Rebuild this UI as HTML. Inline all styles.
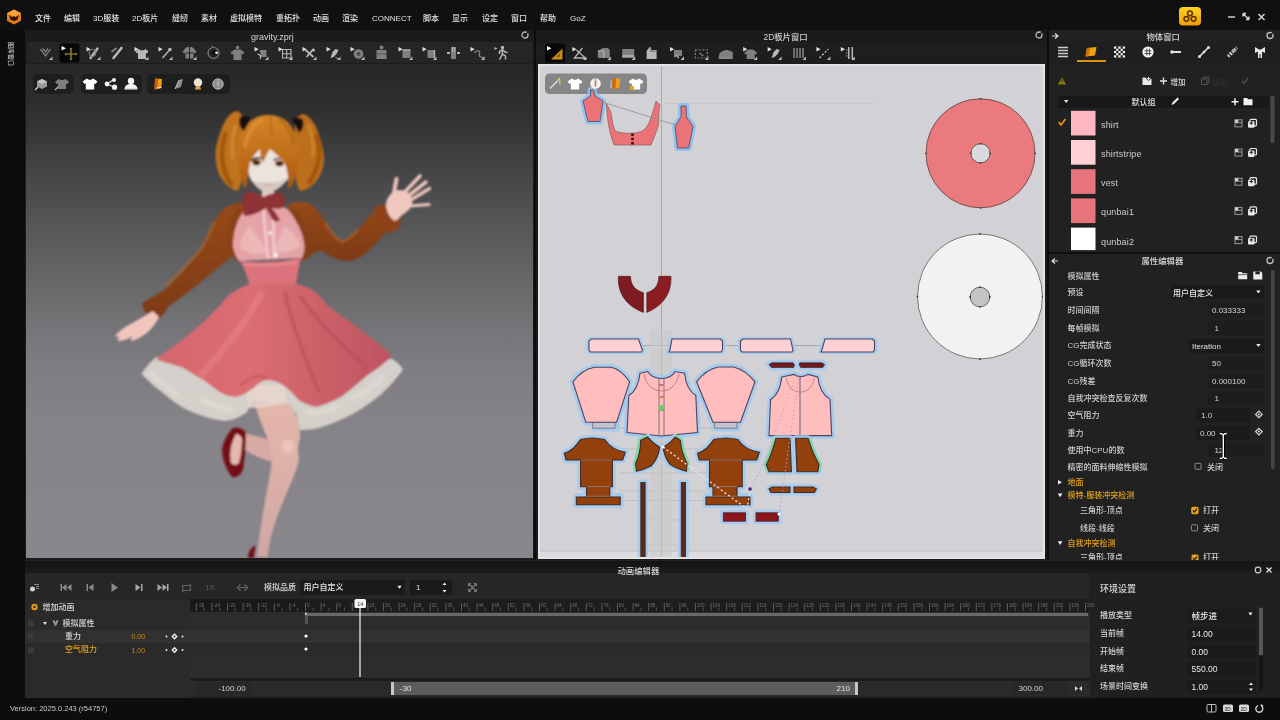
<!DOCTYPE html>
<html lang="zh">
<head>
<meta charset="utf-8">
<title>gravity.zprj</title>
<style>
*{box-sizing:border-box;margin:0;padding:0}
html,body{width:1280px;height:720px;overflow:hidden;background:#0d0d0d}
body{position:relative;font-family:"Liberation Sans","Noto Sans CJK SC",sans-serif;font-size:8px;color:#d8d8d8;line-height:1}
.abs{position:absolute}
.t{position:absolute;white-space:nowrap;color:#cfcfcf;font-size:8px;line-height:10px;height:10px;font-weight:500;filter:blur(.4px)}
svg{position:absolute;overflow:visible}
#menubar{left:0;top:0;width:1280px;height:30px;background:#101010}
#menubar .t{top:13.500px;color:#e2e2e2}
#leftbar{left:0;top:30px;width:25px;height:672px;background:#0c0c0c}
#win3d{left:25px;top:30px;width:509px;height:531px;background:#1b1b1b}
#tb3d{left:27px;top:42px;width:506px;height:21px;background:#252525}
#view3d{left:26px;top:64px;width:506.500px;height:494px;background:linear-gradient(to bottom,#272727 0%,#303030 10%,#424244 20%,#525254 30%,#626265 40.500%,#717174 50.600%,#7e7c81 60.700%,#858387 72%,#89878b 100%);overflow:hidden}
#win2d{left:536px;top:30px;width:511px;height:531px;background:#1b1b1b}
#tb2d{left:536px;top:42px;width:511px;height:21px;background:#1e1e1e}
#view2d{left:538px;top:64px;width:507px;height:494.500px;background:#d2d1d5;border:2px solid #e4e4e7;overflow:hidden}
#right{left:1049px;top:30px;width:231px;height:531px;background:#212121}
#bottom{left:25px;top:560px;width:1255px;height:138px;background:#232323}
#status{left:0;top:698px;width:1280px;height:22px;background:#0e0e0e}
.pill{position:absolute;border-radius:5px;background:rgba(22,22,22,.62);filter:blur(.6px)}
</style>
</head>
<body>
<div id="menubar" class="abs">
<svg style="left:6px;top:9px" width="16" height="16" viewBox="0 0 16 16"><polygon points="8,0.5 15,4.2 15,11.8 8,15.5 1,11.8 1,4.2" fill="#e8791a"/><polygon points="8,0.5 15,4.2 8,8 1,4.2" fill="#f6a23a"/><polygon points="3.2,6 6.3,8.2 8,7 9.7,8.2 12.8,6 11.5,10.5 8,12.3 4.5,10.5" fill="#2a1608"/></svg>
<span class="t" style="left:35px">文件</span>
<span class="t" style="left:64px">编辑</span>
<span class="t" style="left:93px">3D服装</span>
<span class="t" style="left:132px">2D板片</span>
<span class="t" style="left:172px">缝纫</span>
<span class="t" style="left:201px">素材</span>
<span class="t" style="left:230px">虚拟模特</span>
<span class="t" style="left:276px">重拓扑</span>
<span class="t" style="left:313px">动画</span>
<span class="t" style="left:342px">渲染</span>
<span class="t" style="left:372px">CONNECT</span>
<span class="t" style="left:423px">脚本</span>
<span class="t" style="left:452px">显示</span>
<span class="t" style="left:482px">设定</span>
<span class="t" style="left:511px">窗口</span>
<span class="t" style="left:540px">帮助</span>
<span class="t" style="left:570px">GoZ</span>
<svg style="left:1179px;top:7px" width="22" height="19" viewBox="0 0 22 19"><defs><linearGradient id="gy" x1="0" y1="0" x2="0" y2="1"><stop offset="0" stop-color="#ffd41e"/><stop offset="1" stop-color="#f09a10"/></linearGradient></defs><rect x="0" y="0" width="22" height="18.500" rx="4" fill="url(#gy)"/><g fill="none" stroke="#5a3200" stroke-width="1.500"><circle cx="11" cy="6.300" r="2.400"/><circle cx="7.400" cy="11.800" r="2.400"/><circle cx="14.600" cy="11.800" r="2.400"/></g></svg>
<svg style="left:1224px;top:10px" width="46" height="14" viewBox="0 0 46 14"><g stroke="#d8d8d8" stroke-width="1.4" fill="none"><path d="M4 7h7"/><path d="M19 3.5l6 6M19 3.5h3M19 3.5v3M25 9.500h-3M25 9.500v-3"/><path d="M34.500 4l6 6M40.500 4l-6 6"/></g></svg>
</div>
<div id="leftbar" class="abs"><span class="t" style="left:-1.500px;top:18.500px;font-size:6px;letter-spacing:0;transform:rotate(90deg);transform-origin:center;width:24px;text-align:center;color:#c4c4c4">图库窗口</span></div>
<div id="win3d" class="abs"></div><div id="tb3d" class="abs"></div>
<div id="win2d" class="abs"></div><div id="tb2d" class="abs"></div>
<span class="t" style="left:251px;top:31.500px;font-size:9px;color:#d4d4d4">gravity.zprj</span>
<span class="t" style="left:763.500px;top:32px;color:#d4d4d4;font-size:8.400px">2D板片窗口</span>
<svg style="left:521px;top:31px" width="8" height="8" viewBox="0 0 8 8"><circle cx="4" cy="4" r="3" fill="none" stroke="#bdbdbd" stroke-width="1.3"/><path d="M4 4L7 1" stroke="#1b1b1b" stroke-width="1.2"/></svg>
<svg style="left:1035px;top:31px" width="8" height="8" viewBox="0 0 8 8"><circle cx="4" cy="4" r="3" fill="none" stroke="#bdbdbd" stroke-width="1.3"/><path d="M4 4L7 1" stroke="#1b1b1b" stroke-width="1.2"/></svg>
<svg style="left:1266px;top:31px" width="8" height="8" viewBox="0 0 8 8"><circle cx="4" cy="4" r="3" fill="none" stroke="#bdbdbd" stroke-width="1.3"/><path d="M4 4L7 1" stroke="#1b1b1b" stroke-width="1.2"/></svg>
<svg style="left:1266px;top:256px" width="8" height="8" viewBox="0 0 8 8"><circle cx="4" cy="4" r="3" fill="none" stroke="#bdbdbd" stroke-width="1.3"/><path d="M4 4L7 1" stroke="#1b1b1b" stroke-width="1.2"/></svg>
<svg style="left:0;top:0" width="1280" height="70" viewBox="0 0 1280 70"><g style="filter:blur(.5px)">
<g transform="translate(45.5 53)"><path d="M-5-4l5 7 5-7M-2.500-4.500l2.500 3.500 2.500-3.500" fill="none" stroke="#808080" stroke-width="1.3"/><path d="M7 7h-3.500l3.500-3.500z" fill="#bdbdbd"/></g>
<g transform="translate(69.5 53)"><rect x="-10" y="-9.500" width="20" height="19" rx="2" fill="#070707"/><path d="M-8-7l4.500 2.300-4.500 2.300z" fill="#fff"/><g stroke="#b09a40" stroke-width="1.200" fill="#b09a40"><path d="M1.500-3.500v9M-3 1h9"/><path d="M1.500-5.500l-1.600 2h3.200zM1.500 7.500l-1.600-2h3.200zM-5 1l2-1.600v3.200zM8 1l-2-1.600v3.200z" stroke="none"/></g></g>
<g transform="translate(93.5 53)"><path d="M-7-6l4.200 2.200-4.200 2.200z" fill="#e0e0e0"/><path d="M-3 5l7-9.500" stroke="#b8b8b8" stroke-width="2.400" stroke-linecap="round"/><circle cx="-1" cy="0" r="3.500" fill="none" stroke="#808080" stroke-width="1"/><path d="M7 7h-3.500l3.500-3.500z" fill="#bdbdbd"/></g>
<g transform="translate(117.5 53)"><path d="M-4 5l8-10" stroke="#b8b8b8" stroke-width="2.600" stroke-linecap="round"/><path d="M-6-1l5-4" stroke="#808080" stroke-width="2"/></g>
<g transform="translate(141.5 53)"><path d="M-7-6l4.200 2.200-4.200 2.200z" fill="#e0e0e0"/><path d="M-3-4l2 1.200h3l2-1.200 3 2.500-1.500 2-1-.6v6h-8v-6l-1 .6-1.500-2z" fill="#b8b8b8"/><path d="M7 7h-3.500l3.500-3.500z" fill="#bdbdbd"/></g>
<g transform="translate(165.5 53)"><path d="M-7-6l4.200 2.200-4.200 2.200z" fill="#e0e0e0"/><path d="M-3 5l7-8" stroke="#b8b8b8" stroke-width="1.400"/><circle cx="4.500" cy="-3.500" r="1.800" fill="#b8b8b8"/><path d="M7 7h-3.500l3.500-3.500z" fill="#bdbdbd"/></g>
<g transform="translate(189.5 53)"><path d="M-7-1l3-4 2.500-1.200 1.500 1.200 1.500-1.200 2.500 1.200 3 4-2 1.500-1-1v6h-8v-6l-1 1z" fill="#808080"/><path d="M0-5v11M-4 0h8" stroke="#262626" stroke-width="1"/><path d="M7 7h-3.500l3.500-3.500z" fill="#bdbdbd"/></g>
<g transform="translate(213.5 53)"><circle cx="0" cy="0" r="5.500" fill="none" stroke="#808080" stroke-width="1.200"/><circle cx="1" cy="-.5" r="2.600" fill="#0c0c0c"/><circle cx="3" cy="-.2" r="1.300" fill="#fff"/><path d="M-2-7l2 1.500" stroke="#808080" stroke-width="1"/></g>
<g transform="translate(237.5 53)"><circle cx="0" cy="-5.500" r="1.700" fill="#808080"/><path d="M-3-3.500h6l4 3-1.500 2-1.500-1v6.500h-8v-6.500l-1.500 1-1.500-2z" fill="#808080"/></g>
<g transform="translate(261.5 53)"><path d="M-7-6l4.200 2.200-4.200 2.200z" fill="#e0e0e0"/><path d="M-2-3h7v7h-5z" fill="#808080"/><path d="M-4 1l3 1.500v3.500" stroke="#b8b8b8" stroke-width="1.300" fill="none"/><path d="M7 7h-3.500l3.500-3.500z" fill="#bdbdbd"/></g>
<g transform="translate(285.5 53)"><path d="M-7-6l4.200 2.200-4.200 2.200z" fill="#e0e0e0"/><path d="M-3-3.500h8.500v8.500h-8.500zM-3 .7h8.500M1.200-3.500v8.500" fill="none" stroke="#b8b8b8" stroke-width="1.100"/><path d="M7 7h-3.500l3.500-3.500z" fill="#bdbdbd"/></g>
<g transform="translate(309.5 53)"><path d="M-7-6l4.200 2.200-4.200 2.200z" fill="#e0e0e0"/><path d="M-4-3l8 7M4-4l-7 8" stroke="#b8b8b8" stroke-width="1.800"/><circle cx="4" cy="-3" r="1.500" fill="#b8b8b8"/><path d="M7 7h-3.500l3.500-3.500z" fill="#bdbdbd"/></g>
<g transform="translate(333.5 53)"><path d="M-7-6l4.200 2.200-4.200 2.200z" fill="#e0e0e0"/><path d="M-3 5l2-6 3-3 3 1-2 4-3 3z" fill="#b8b8b8"/><path d="M2 4l3 2" stroke="#808080" stroke-width="1.200"/><path d="M7 7h-3.500l3.500-3.500z" fill="#bdbdbd"/></g>
<g transform="translate(357.5 53)"><path d="M-7-6l4.200 2.200-4.200 2.200z" fill="#e0e0e0"/><circle cx="1" cy="1" r="4.800" fill="#808080"/><circle cx="1" cy="1" r="2" fill="#4a4a4a"/><path d="M7 7h-3.500l3.500-3.500z" fill="#bdbdbd"/></g>
<g transform="translate(381.5 53)"><circle cx="0" cy="-5.500" r="2" fill="#808080"/><rect x="-5" y="-3" width="10" height="9" fill="#808080"/><path d="M-5 1h10" stroke="#555" stroke-width="1"/></g>
<g transform="translate(405.5 53)"><path d="M-7-6l4.200 2.200-4.200 2.200z" fill="#e0e0e0"/><path d="M-3-3h8v8h-8z" fill="#808080"/><path d="M-3-3h8" stroke="#b8b8b8" stroke-width="1.300"/><path d="M7 7h-3.500l3.500-3.500z" fill="#bdbdbd"/></g>
<g transform="translate(429.5 53)"><path d="M-7-6l4.200 2.200-4.200 2.200z" fill="#e0e0e0"/><path d="M-2-3h7v8h-7z" fill="#808080"/><path d="M5-3v8" stroke="#b8b8b8" stroke-width="1.300"/><path d="M7 7h-3.500l3.500-3.500z" fill="#bdbdbd"/></g>
<g transform="translate(453.5 53)"><rect x="-2.500" y="-6" width="5" height="12" fill="#808080"/><path d="M-1-6v5M1-6v5" stroke="#b8b8b8" stroke-width=".9"/><path d="M-6.500 0h3M3.500 0h3" stroke="#e0e0e0" stroke-width="1.600"/></g>
<g transform="translate(477.5 53)"><path d="M-7-6l4.200 2.200-4.200 2.200z" fill="#e0e0e0"/><path d="M-3 0c3-4 6-2 5 1s2 4 5 3" fill="none" stroke="#808080" stroke-width="1.300"/><path d="M7 7h-3.500l3.500-3.500z" fill="#bdbdbd"/></g>
<g transform="translate(501.5 53)"><circle cx="1" cy="-5.500" r="1.700" fill="#b8b8b8"/><path d="M1-3.500l-3 2v2.500M1-3.500l2.500 2.500 2.500 .5M.5-3.500l.5 4.500-3 5.500M1 1l3 2v3.500" fill="none" stroke="#b8b8b8" stroke-width="1.500"/><path d="M-7-6l3 1.500-3 1.500z" fill="#b8b8b8"/></g>
<g transform="translate(555.0 53)"><rect x="-10" y="-9.500" width="20" height="19" rx="2" fill="#070707"/><path d="M-8-7l4.500 2.300-4.500 2.300z" fill="#fff"/><path d="M-4 6.500h11.500v-11z" fill="#c98d12"/><path d="M1 4h4v-4z" fill="#8a5c06"/></g>
<g transform="translate(579.4 53)"><path d="M-7-6l4.200 2.200-4.200 2.200z" fill="#e0e0e0"/><path d="M-3-3l9 8h-11l8-10" fill="none" stroke="#b8b8b8" stroke-width="1.300"/><path d="M7 7h-3.500l3.500-3.500z" fill="#bdbdbd"/></g>
<g transform="translate(603.8 53)"><path d="M-6-2l5-3h5l2 2v8h-12z" fill="#808080"/><path d="M-6-2h6v7" fill="none" stroke="#b8b8b8" stroke-width="1"/><path d="M7 7h-3.500l3.500-3.500z" fill="#bdbdbd"/></g>
<g transform="translate(628.2 53)"><rect x="-6" y="-4" width="12" height="9" fill="#808080"/><path d="M-6 3h12" stroke="#b8b8b8" stroke-width="1.500"/><path d="M7 7h-3.500l3.500-3.500z" fill="#bdbdbd"/></g>
<g transform="translate(652.6 53)"><path d="M-6 6v-8l3-4 2 3h5v9z" fill="#b8b8b8"/><path d="M-2-6v4h5" stroke="#808080" stroke-width="1.300" fill="none"/></g>
<g transform="translate(677.0 53)"><path d="M-7-6l4.200 2.200-4.200 2.200z" fill="#e0e0e0"/><path d="M-3-3h8v6h-5l-3 2z" fill="#808080"/><path d="M-1 2l3 3" stroke="#b8b8b8" stroke-width="1.300"/><path d="M7 7h-3.500l3.500-3.500z" fill="#bdbdbd"/></g>
<g transform="translate(701.4 53)"><path d="M-6-3h12v8h-12z" fill="none" stroke="#808080" stroke-width="1.200" stroke-dasharray="2 1.500"/><path d="M-2 0l4 3" stroke="#808080" stroke-width="1.300"/><path d="M7 7h-3.500l3.500-3.500z" fill="#bdbdbd"/></g>
<g transform="translate(725.8 53)"><path d="M-7 4c0-5 4-7 9-7l5 2v5z" fill="#808080"/><path d="M-7 5h14" stroke="#b8b8b8" stroke-width="1.400"/></g>
<g transform="translate(750.2 53)"><path d="M-7-6l4.200 2.200-4.200 2.200z" fill="#e0e0e0"/><path d="M-4-2l2.500-1.500h4l2.500 1.500 2 2-1.500 1.500-1-.8v5.300h-8v-5.300l-1 .8-1.500-1.500z" fill="#808080"/><path d="M7 7h-3.500l3.500-3.500z" fill="#bdbdbd"/></g>
<g transform="translate(774.6 53)"><path d="M-7-6l4.200 2.200-4.200 2.200z" fill="#e0e0e0"/><path d="M-3 5l2-6 3-3 3 1-2 4-3 3z" fill="#b8b8b8"/><path d="M7 7h-3.500l3.500-3.500z" fill="#bdbdbd"/></g>
<g transform="translate(799.0 53)"><path d="M-5-5v10M-2-5v10M1-5v10M4-5v10" stroke="#808080" stroke-width="1.600"/><path d="M7 7h-3.500l3.500-3.500z" fill="#bdbdbd"/></g>
<g transform="translate(823.4 53)"><path d="M-7-6l4.200 2.200-4.200 2.200z" fill="#e0e0e0"/><path d="M-4 5l9-9" stroke="#b8b8b8" stroke-width="1.300" stroke-dasharray="2.200 1.600"/><path d="M7 7h-3.500l3.500-3.500z" fill="#bdbdbd"/></g>
<g transform="translate(847.8 53)"><path d="M-7-6l4.200 2.200-4.200 2.200z" fill="#e0e0e0"/><path d="M1-6v12M4.500-6v12" stroke="#b8b8b8" stroke-width="1.500"/><path d="M-2-3h2M-2 0h2M-2 3h2" stroke="#808080" stroke-width="1"/><path d="M7 7h-3.500l3.500-3.500z" fill="#bdbdbd"/></g>
</g></svg>
<div id="view3d" class="abs">
<svg style="left:0;top:0" width="507" height="494" viewBox="26 64 507 494">
<defs>
<linearGradient id="gHair" x1="0" y1="0" x2="0" y2="1"><stop offset="0" stop-color="#d38628"/><stop offset=".55" stop-color="#c06e1a"/><stop offset="1" stop-color="#a85612"/></linearGradient>
<linearGradient id="gSkirt" x1="0" y1="0" x2="1" y2="0"><stop offset="0" stop-color="#d4666c"/><stop offset=".4" stop-color="#db6e73"/><stop offset="1" stop-color="#bd5460"/></linearGradient>
<linearGradient id="gBrown" x1="0" y1="0" x2="0" y2="1"><stop offset="0" stop-color="#96491a"/><stop offset="1" stop-color="#7e3a12"/></linearGradient>
<linearGradient id="gLeg" x1="0" y1="0" x2="0" y2="1"><stop offset="0" stop-color="#e4b6aa"/><stop offset=".35" stop-color="#dfb2a8"/><stop offset="1" stop-color="#cfa6a4"/></linearGradient>
<filter id="b1"><feGaussianBlur stdDeviation=".9"/></filter>
<filter id="b2"><feGaussianBlur stdDeviation="1.6"/></filter>
</defs>
<g filter="url(#b1)">
<!-- back hair / pigtails -->
<path d="M244 119c-2-4-4-7-7-8-5 1-9 5-12 10-4 8-7 17-9 27-1 10 0 20 4 28 4 7 10 13 17 15 3-3 4-8 5-13 2-10 4-20 5-30 1-10 0-20-3-29z" fill="#c0731e"/>
<path d="M296 119c2-3 5-5 8-5 5 2 9 7 12 13 4 9 7 19 8 30 0 9-2 17-7 23-4 6-10 10-17 11-3-4-4-9-4-14-1-10-2-20-2-30 0-10 0-19 2-28z" fill="#bb6e1c"/>
<path d="M226 132c-6 16-6 36 6 54" fill="none" stroke="#9c500c" stroke-width="5" opacity=".75"/>
<path d="M236 125c-4 10-5 22-3 34" fill="none" stroke="#e09838" stroke-width="3" opacity=".6"/>
<path d="M316 134c6 16 4 34-8 50" fill="none" stroke="#9c500c" stroke-width="5" opacity=".75"/>
<path d="M308 124c4 10 6 20 5 32" fill="none" stroke="#e09838" stroke-width="3" opacity=".55"/>
<!-- neck -->
<path d="M262 185h12v14h-12z" fill="#e6cfc8"/>
<!-- right arm cardigan -->
<path d="M287 205c7-3 15-4 21-2 8 4 13 11 17 19 4 8 10 16 17 20 6-2 11-7 16-12 6-8 13-16 21-23 4-3 9-3 13-1 5 3 8 9 9 16-3 4-8 6-14 8-6 8-13 16-21 23-6 5-13 8-20 8-9-1-17-5-24-10-7 0-12 4-14 8z" fill="url(#gBrown)"/>
<path d="M325 222c4 8 10 16 17 20 6-2 11-7 16-12" stroke="#b5632a" stroke-width="3" fill="none" opacity=".6"/>
<path d="M374 208c5-4 12-4 17-1 6 4 9 10 10 17-2 5-7 8-13 9-6-6-11-15-14-25z" fill="#8c4218"/>
<!-- left arm cardigan -->
<path d="M248 204c-8-2-17 0-23 4-6 5-10 12-13 20-3 7-6 13-8 19-12 14-24 28-37 41-8 5-16 10-25 15 0 4 2 8 5 11 3 3 7 5 11 6 4-4 8-9 11-14 14-10 28-20 40-31 9-7 17-14 25-21 1-16 6-34 14-50z" fill="url(#gBrown)"/>
<path d="M214 222c-4 10-8 20-14 28-10 12-22 24-34 36" stroke="#b5632a" stroke-width="3.500" fill="none" opacity=".55"/>
<!-- cardigan body sides -->
<path d="M240 205c-6 6-10 14-12 22-1 10 1 20 4 30l8 5c-1-12 0-26 4-38z" fill="#8a4216"/>
<path d="M292 206c6 6 11 14 14 22 3 10 3 20 2 30l-7 3c1-12 0-26-4-38z" fill="#84401a"/>
<!-- shirt -->
<path d="M249 205c-5 5-9 11-11.500 17-3 8-5 16-4.500 25 1 5 3 10 6 14l63-3c2-5 3-10 2-15-1-9-5-17-10-25-2-4-5-7-8-10-12-3-25-4-37-3z" fill="#e4a3a7"/>
<path d="M250 226c-6 6-10 14-10 22 8 6 20 8 28 4zM284 226c8 4 14 12 16 20-8 6-18 8-26 5z" fill="#eebcbc" opacity=".8"/>
<path d="M263 208l5 51M273 208l1 51" stroke="#f4cccc" stroke-width="2.500" fill="none"/>
<circle cx="270" cy="233" r="1.700" fill="#fff"/><circle cx="276" cy="255" r="1.900" fill="#fff"/>
<!-- waist -->
<path d="M240 261c20 2 42 1 61-3-2 9-4 17-5 26h-47c-2-9-5-16-9-23z" fill="#dc737b"/>
<path d="M244 264c18 2 36 1 54-2" stroke="#e88c90" stroke-width="2" fill="none"/>
<!-- skirt ruffle (white) -->
<path d="M156 357c-6 5-11 11-14.500 17 6 6 13 13 21 18.500 8 7 17 14 27 18.500 12 5 24 9 35.500 10 8-1 15-4 21-8 3-4 5-8 6-12l35.500 4c2 3 5 6 8.500 8l4 17c9 0 17-1 25-4 12-4 23-9 33-15 11-7 21-14 29.500-23 6-6 11-12 15.500-18.400-3-5-6-8-11-10.600z" fill="#d8d4cd" opacity=".95"/>
<path d="M150 372c8 8 18 16 28 23M200 398c10 6 22 10 34 12M305 412c10 2 22-1 34-6M350 400c12-6 24-14 34-24" stroke="#e8e5df" stroke-width="5" fill="none" opacity=".5" filter="url(#b2)"/>
<!-- legs -->
<path d="M244 433c10 2 20 5 30 8l6 9-8 12c-10-3-20-7-28-13z" fill="#d8aaa4"/>
<path d="M255 404c3 12 8 24 13 36 2 6 4 12 4.500 18-2 14-5 30-8 46-3 16-5 32-7 46l-1 7h11c2-16 6-32 12-46 5-14 12-28 17-42 2-6 3-10 2-14-1-6 0-12 1.500-17 1-12-4-24-10-34z" fill="url(#gLeg)"/>
<ellipse cx="288" cy="447" rx="6" ry="7" fill="#f0cec4" opacity=".7" filter="url(#b2)"/>
<path d="M233 428c6-1 11 1 13 5 0 12-1 24-3 36-2 6-6 9-11 8-6-8-10-18-10-28 2-9 6-16 11-21z" fill="#740d16"/>
<path d="M236 434c3 0 5 2 6 5 0 8-1 16-3 24-3 3-6 2-8 0-2-10 0-20 5-29z" fill="#e4b8ae"/>
<path d="M254 546c-3 2-6 6-6 12h6c0-4 1-8 2-11z" fill="#740d16"/>
<!-- inner ruffle translucent -->
<path d="M246 385h38l3 17c-12 4-26 6-39 6z" fill="#e8d6cc" opacity=".85"/>
<!-- skirt -->
<path d="M248 284h48c6 1 12 3 16.500 6 6 4 10 9 14.500 15 7 6 15 11 23 17 7 5 14 10 21 16 6 4 11 8 16.500 13 2 2 3 4 4 6-8 7-16 13-25 19-8 7-16 14-25 20.700-8 4-16 8-25 10.300-6-1-11-3-17-6-4-4-8-9-12.500-13-6-5-13-8-20.500-8-5 1-9 4-13 8-5 4-10 7-16.500 8.700-6 0-11-1-16.500-4.200-6-4-11-8-17-12.500-7-4-14-8-21-12.500-9-3-18-5-27-8.500 2-1 4-2 6.500-4 6-5 13-10 20.500-15 7-6 14-12 21-18 6-6 11-11 17-17 4-5 7-10 12-12.500 4-3 10-6 16-8z" fill="url(#gSkirt)"/>
<path d="M262 292c-14 28-36 56-62 84" fill="none" stroke="#e88488" stroke-width="7" opacity=".55"/>
<path d="M285 292c6 30 18 62 34 100M300 296c18 26 42 50 68 72" fill="none" stroke="#b84c58" stroke-width="4" opacity=".55"/>
<path d="M240 386c8-8 18-12 28-8" fill="none" stroke="#b84c58" stroke-width="3" opacity=".5"/>
<!-- hands -->
<g stroke="#f1c8bf" stroke-linecap="round" fill="none">
<path d="M393 198l3.500-19" stroke-width="4"/>
<path d="M403 194l17-18" stroke-width="3.600"/>
<path d="M407 197l19-15" stroke-width="3.600"/>
<path d="M409 201l20.500-12.500" stroke-width="3.400"/>
<path d="M409 206l20-1.500" stroke-width="3.200"/>
</g>
<path d="M386 203c1-5 4-9 8-12 4-2 9-1 13 1 4 3 6 8 5 13-2 5-7 8-11 11-2 2-4 4-6 5-5-3-9-9-9-18z" fill="#f1c8bf"/>
<path d="M153 311c-8 5-17 10-26 15-5 3-9 6-12 10 1 1 3 1 5 0-2 2-3 4-2 5 5 0 10-2 15-5-2 2-3 4-2 5 6-1 12-5 17-9 5-5 9-10 11-15z" fill="#f0c6bd"/>
<!-- face -->
<path d="M248 152c-2 10-1 20 3 28 5 7 11 12 17 13 8-2 16-8 21-16 3-8 4-16 2-25-8-8-34-8-43 0z" fill="#ece2de"/>
<path d="M251 180c5 7 11 12 17 13 8-2 16-8 21-16-8 6-28 8-38 3z" fill="#d9c7c2"/>
<ellipse cx="256.500" cy="162.500" rx="4.300" ry="3" fill="#6a3414"/><ellipse cx="279.500" cy="163.500" rx="4.300" ry="3" fill="#6a3414"/><circle cx="256.500" cy="162.800" r="1.500" fill="#2a1206"/><circle cx="279.500" cy="163.800" r="1.500" fill="#2a1206"/>
<path d="M250.500 161c3-3 8-4 12-2M273.500 160.500c4-3 9-2.500 12.500 .5" stroke="#24120a" stroke-width="1.700" fill="none"/><path d="M264 184c3 1.500 6 1.500 9 0" stroke="#c09a94" stroke-width="1" fill="none"/>
<!-- front hair -->
<path d="M270 115c-12-1-24 6-28 19-3 12-4 26-2 40 1 7 3 12 6 15 2-8 2-17 4-26 2-6 6-10 10-14 0 5 1 10 3 14 2-5 4-10 7-14 5 4 10 8 14 13 4 8 5 18 4 28 6-6 9-15 10-25 1-14-1-27-6-37-5-9-12-12-22-13z" fill="url(#gHair)"/>
<path d="M262 120c-9 5-15 14-17 28" stroke="#eaa040" stroke-width="3" fill="none" opacity=".55"/>
<path d="M279 119c8 5 13 14 15 26" stroke="#9c520e" stroke-width="3" fill="none" opacity=".45"/>
<path d="M270 116c0 8 1 14 3 20" stroke="#a65a10" stroke-width="1.500" fill="none" opacity=".6"/>
<!-- hair ties -->
<path d="M240 117c3-2 8-1 11 2l-7 12c-4-2-6-8-4-14z" fill="#15100a"/>
<path d="M292 119c3-2 8-2 11 1 1 5 0 10-4 13z" fill="#15100a"/>
<!-- bow -->
<path d="M244 193c6-2 14 0 20 4 4-3 12-5 18-4 3 4 4 10 2 14-4 2-8 2-12 1 3 4 6 8 8 12-2 2-5 2-7 0-3-4-5-8-7-12-6 4-14 8-22 8-2-8-2-16 0-23z" fill="#8f3034"/>
</g>
</svg>
<div class="pill" style="left:7px;top:10px;width:41px;height:20px"></div>
<div class="pill" style="left:55px;top:10px;width:61px;height:20px"></div>
<div class="pill" style="left:121px;top:10px;width:83px;height:20px"></div>
<svg style="left:0;top:1px" width="240" height="40" viewBox="26 64 240 40"><g style="filter:blur(.45px)">
<g transform="translate(42 83)"><path d="M-5-2.500l5-2.500 5 2.500v5l-5 2.500-5-2.500z" fill="#9a9a9a"/><path d="M-5-2.500l5 2.500 5-2.500-5-2.500z" fill="#c4c4c4"/><path d="M-7 6l3-3" stroke="#ddd" stroke-width="1.200"/></g>
<g transform="translate(62 83)"><path d="M-3-5l1.800 1h2.400l1.800-1 4 2.800-1.800 2.400-1.200-.8v5.600h-8v-5.600l-1.200 .8-1.800-2.400z" fill="#7d7d7d"/><path d="M-7 6l3-3" stroke="#bbb" stroke-width="1.200"/></g>
<g transform="translate(90 83)"><path d="M-3.200-5.500l2 1.200h2.400l2-1.200 4.300 3-2 2.600-1.300-.9v6.300h-8.400v-6.300l-1.300 .9-2-2.600z" fill="#fff"/></g>
<g transform="translate(111 83)"><path d="M-4 0l6-4M-4 0l7 3" stroke="#ddd" stroke-width="1.300"/><circle cx="-4" cy="0" r="2.400" fill="#f4f4f4"/><circle cx="3" cy="-4" r="2" fill="#f4f4f4"/><circle cx="3.500" cy="3.200" r="2.600" fill="#f4f4f4"/></g>
<g transform="translate(131 83)"><circle cx="0" cy="-3" r="3.200" fill="#f4f4f4"/><path d="M-6.500 5.500c0-4 3-5.500 6.500-5.500s6.500 1.500 6.500 5.500z" fill="#f4f4f4"/><path d="M-6.500 5.300h13" stroke="#888" stroke-width="1"/></g>
<g transform="translate(158 83)"><path d="M-3-5.500l7 .5-.5 9-7 1.500z" fill="#f39a14"/><path d="M-3-5.500l3 .2-.6 10.200-2.900 .6z" fill="#d4520c"/><path d="M-1 4l4-.5" stroke="#fff" stroke-width="1.200"/></g>
<g transform="translate(179 83)"><path d="M-4 5l4-9 4-1-2 8z" fill="#8c8c8c"/><path d="M-4 5l4-9" stroke="#bdbdbd" stroke-width="1"/></g>
<g transform="translate(198 83)"><circle cx="0" cy="-1.500" r="4.200" fill="#f2e2d6"/><path d="M-3 5.500c0-2.500 1.500-3.500 3-3.500s3 1 3 3.500z" fill="#e8a04a"/></g>
<g transform="translate(218 83)"><circle cx="0" cy="0" r="5.200" fill="#8f8f8f"/><circle cx="0" cy="0" r="5.200" fill="none" stroke="#b8b8b8" stroke-width="1"/><path d="M0-2.500v4" stroke="#c8c8c8" stroke-width="1.300"/></g>
</g></svg>
</div>
<div id="view2d" class="abs">
<svg style="left:-2px;top:-2px" width="507" height="494" viewBox="538 64 507 494">
<defs>
<filter id="p1"><feGaussianBlur stdDeviation=".55"/></filter>
<filter id="halo" x="-10%" y="-10%" width="120%" height="120%"><feGaussianBlur stdDeviation=".7"/></filter>
</defs>
<!-- guide lines -->
<rect x="538" y="551.500" width="507" height="8" fill="#dcdce0"/><path d="M538 551h507" stroke="#c2c2c6" stroke-width="1"/>
<path d="M661.500 66v492" stroke="#a9a9ab" stroke-width="1"/>
<path d="M664 103.500h212" stroke="#c9c9cb" stroke-width="1"/>
<path d="M620 449h92M620 473h92M620 491h92M620 500.500h92M645 520h36M645 545h36" stroke="#bfbfc2" stroke-width="1"/>
<path d="M642.500 345.500h27M722.500 345.500h18M793 345.500h28" stroke="#a8a8aa" stroke-width="1"/>
<path d="M617 428h12M696 428h18" stroke="#b8b8ba" stroke-width="1"/>
<rect x="650" y="330" width="22" height="230" fill="#c9c9cb" opacity=".55"/>
<rect x="545" y="73.500" width="102" height="20.500" rx="4.500" fill="#868686"/>
<g filter="url(#p1)">
<!-- circles -->
<circle cx="980.500" cy="153.300" r="54.500" fill="#ea7a7e" stroke="#7a5052" stroke-width="1"/>
<circle cx="980.500" cy="153.300" r="9.600" fill="#dadadc" stroke="#6a5a5a" stroke-width="1"/>
<circle cx="980" cy="296.500" r="62.500" fill="#f3f1f1" stroke="#777" stroke-width="1"/>
<circle cx="980" cy="297" r="9.800" fill="#c4c4c6" stroke="#666" stroke-width="1"/>
<circle cx="1035.0" cy="153.3" r=".9" fill="#3a3a3a"/><circle cx="926.0" cy="153.3" r=".9" fill="#3a3a3a"/><circle cx="980.5" cy="207.8" r=".9" fill="#3a3a3a"/><circle cx="980.5" cy="98.8" r=".9" fill="#3a3a3a"/><circle cx="1042.5" cy="296.5" r=".9" fill="#3a3a3a"/><circle cx="917.5" cy="296.5" r=".9" fill="#3a3a3a"/><circle cx="980.0" cy="359.0" r=".9" fill="#3a3a3a"/><circle cx="980.0" cy="234.0" r=".9" fill="#3a3a3a"/><circle cx="990.1" cy="153.3" r=".9" fill="#3a3a3a"/><circle cx="970.9" cy="153.3" r=".9" fill="#3a3a3a"/><circle cx="980.5" cy="162.9" r=".9" fill="#3a3a3a"/><circle cx="980.5" cy="143.7" r=".9" fill="#3a3a3a"/><circle cx="989.8" cy="297.0" r=".9" fill="#3a3a3a"/><circle cx="970.2" cy="297.0" r=".9" fill="#3a3a3a"/><circle cx="980.0" cy="306.8" r=".9" fill="#3a3a3a"/><circle cx="980.0" cy="287.2" r=".9" fill="#3a3a3a"/>
<!-- top vest pieces -->
<g stroke="#8cc0ee" stroke-width="6" fill="none" opacity=".9" stroke-linejoin="round">
<path d="M590.500 90h3l1.500 6 8 5-3 20.500h-12l-5-20.500 7.500-5z"/>
<path d="M681 106h5l.5 11 6.500 9.500-4.300 21.500h-11.200l-2.500-21.500 6-9.500z"/>
</g>
<path d="M590.500 90h3l1.500 6 8 5-3 20.500h-12l-5-20.500 7.500-5z" fill="#ea7378" stroke="#4a4a6a" stroke-width=".8"/>
<path d="M681 106h5l.5 11 6.500 9.500-4.300 21.500h-11.200l-2.500-21.500 6-9.500z" fill="#ea7378" stroke="#4a4a6a" stroke-width=".8"/>
<path d="M606 103.500c3 4 5 8 5.500 12 1 8 2 14 5 16 6 2 12 2 16 1.500 8 0 14-2 18-14 2-6 4-12 5.500-18l4 4c-1.500 6-1 10-1.400 20-2 6-5 14-7.600 20h-37c-3-8-5-16-6-24-1-6-1-12-2-17.500z" fill="#ea7378" stroke="#8a5a5a" stroke-width=".7"/>
<path d="M632.500 133.500v11.500" stroke="#3a1010" stroke-width="2.600" stroke-dasharray="2.600 1.600"/>
<path d="M604.500 102.700l71.300 22.300" stroke="#8f8f8f" stroke-width=".8"/>
<!-- collar -->
<path d="M618.400 276.300h12.100c0 9 5 14 12.900 16.400v19.700c-16-6-26-18-25-36.100z" fill="#7b1a20" stroke="#4a1014" stroke-width=".6"/>
<path d="M670.900 276.300h-12.100c0 9-4 14-12 16.400v19.700c15-6 25-18 24.100-36.100z" fill="#8a1c20" stroke="#4a1014" stroke-width=".6"/>
<!-- cuffs strips -->
<g stroke="#a4cbef" stroke-width="5.500" fill="none" opacity=".95" stroke-linejoin="round" filter="url(#halo)">
<path d="M591.500 339h47l4 11.500-1 1.500h-51l-1.500-2v-9z"/><path d="M672 339h48.500l2 2v9l-1.500 2h-52l1-2.500z"/>
<path d="M743 339h47.500l2.500 11.500-1 1.500h-50l-1.500-2v-9z"/><path d="M825 339h47.500l2 2v9l-1.500 2h-52l1-2.500z"/>
</g>
<g fill="#ffd0d2" stroke="#4a4460" stroke-width="1.100">
<path d="M591.500 339h47l4 11.500-1 1.500h-51l-1.500-2v-9z"/><path d="M672 339h48.500l2 2v9l-1.500 2h-52l1-2.500z"/>
<path d="M743 339h47.500l2.500 11.500-1 1.500h-50l-1.500-2v-9z"/><path d="M825 339h47.500l2 2v9l-1.500 2h-52l1-2.500z"/>
</g>
<!-- pink sleeves & shirts halos -->
<g stroke="#a4cbef" stroke-width="6.500" fill="none" opacity=".95" stroke-linejoin="round" filter="url(#halo)">
<path id="sl1" d="M572.900 381.800c6-8 13-13 21.500-14.600h17.200c7 2 13 7 18 14.600l-13 40.400v6h-22v-6h-8.800z"/>
<path d="M696.600 381.800c6-8 13-13 21.400-14.800h15.600c8 2 15 7 21.400 14.800l-14.500 40.400-3.500 .2v5.800h-22.300v-6h-1.700z"/>
<path d="M640 373.200l7.700-1.700c3 5 8 7 13.700 7s11-2 13.600-7l9.600 1.700c1 10 4 18 11.200 22.300l1.700 37-36.100 3.500-34.400-3.500 1.800-37c7-4 10-12 11.200-22.300z"/>
<path d="M781.700 377l12.300-2.600c3 3 10 3 14 0l9.800 2.600c1 10 5 18 12.200 22.400l1.700 36.200h-62.700l1.600-36.200c7-4 10-12 11.100-22.400z"/>
</g>
<path d="M592.700 422h22.300v6.200h-22.300zM714.700 422h22.300v6.200h-22.300z" fill="#c3c3cf" stroke="#5a5a70" stroke-width=".7"/>
<g fill="#ffbdbd" stroke="#4a4460" stroke-width="1.100">
<path d="M572.900 381.800c6-8 13-13 21.500-14.600h17.200c7 2 13 7 18 14.600l-13 40.400h-30.800z"/>
<path d="M696.600 381.800c6-8 13-13 21.400-14.800h15.600c8 2 15 7 21.400 14.800l-14.500 40.400h-27.500z"/>
<path d="M640 373.200l7.700-1.700c3 5 8 7 13.700 7s11-2 13.600-7l9.600 1.700c1 10 4 18 11.200 22.300l1.700 37-36.100 3.500-34.400-3.500 1.800-37c7-4 10-12 11.200-22.300z"/>
<path d="M781.700 377l12.300-2.600c3 3 10 3 14 0l9.800 2.600c1 10 5 18 12.200 22.400l1.700 36.200h-62.700l1.600-36.200c7-4 10-12 11.100-22.400z"/>
</g>
<path d="M659 378v57M664 378v57" stroke="#6a6078" stroke-width=".8" fill="none"/>
<path d="M644 374c2 12 10 17 17.500 17s15-5 17.500-17" stroke="#b07070" stroke-width=".8" fill="none"/>
<path d="M659.500 385h4M659.500 397h4M659.500 410h4" stroke="#c05050" stroke-width="1.600"/>
<rect x="658.800" y="405" width="4.200" height="5.500" fill="#6ad05a"/><rect x="658.800" y="396" width="3" height="2.400" fill="#e09030"/>
<path d="M800 376v59" stroke="#6a6078" stroke-width="1"/>
<path d="M786 378c2 10 8 14 14.500 14s12-4 14-14" stroke="#b07070" stroke-width=".7" fill="none"/>
<!-- brown halos -->
<g stroke="#a4cbef" stroke-width="6.500" fill="none" opacity=".95" stroke-linejoin="round" filter="url(#halo)">
<path d="M564.300 453.200c8-2 12-8 16.300-13.700 8-2 16-2 24.100 0 4 6 10 11 20.600 12.800l-2.600 7.700h-10.300v26.700h-2.600v9.500h10.400v8.600h-43.900v-8.600h10.300v-9.500h-6v-26.700h-14.600z"/>
<path d="M697.500 453.200c8-2 12-8 16.300-13.700 8-2 16-2 24.100 0 4 6 10 11 21.500 12.800l-2.600 7.700h-14.600v26.700h-5.200v9.500h13v8.600h-44v-8.600h7v-9.500h-3.500v-26.700h-10z"/>
</g>
<g stroke="#a4cbef" stroke-width="6" fill="none" opacity=".95" stroke-linejoin="round" filter="url(#halo)">
<path d="M647.700 436.900c3 4 8 8 12 10.300-1 8-4 14-8.700 18.800-4 2-9 4-14.500 5.300l-.9-7.800c3-6 5-14 5.100-23.200z"/>
<path d="M675 437c-3 4-8 8-12 10.200 1 7 3 12 7 17.200 4 3 10 5 16.300 6.900l.7-7.800c-3-6-6-14-6.700-23.200z"/>
<path d="M776 438.300h14l1.400 33.400h-22.400l-2.600-7c4-8 7-17 9.600-26.400z"/>
<path d="M795.600 438.300h12.400c3 10 7 19 11 26.400l-1.200 7h-20.800z"/>
<path d="M769 489l3-2h18v5.500h-19zM794 487h19l3.400 2-2 3.500h-20.400z"/>
<path d="M769 364.500l3-1.700h21l1.500 2-1 2.700h-22zM799.700 362.800h22l3 1.700-2 3h-22l-1.500-2.500z"/>
<rect x="723.300" y="512.800" width="22.300" height="8.400"/><rect x="756" y="512.800" width="22.300" height="8.400"/>
<rect x="640.800" y="482.400" width="4.400" height="80"/><rect x="681.200" y="482.400" width="4.400" height="80"/>
</g>
<g stroke="#7cd6a0" stroke-width="5" fill="none" opacity=".9">
<path d="M647.700 436.900c-4 2-6 3-7 3.400-1 8-3 16-5.100 23.200l.9 7.800"/><path d="M675 437c3 1.500 4.500 2.500 5.300 3.300 1 8 4 16 6.700 23.200l-.7 7.800"/>
<path d="M776 438.300c-3 9-6 18-9.600 26.400l2.600 7"/><path d="M808 438c3 10 7 19 11 26.700l-1.200 7"/>
</g>
<g fill="#94400f" stroke="#3e2a20" stroke-width="1.100">
<path d="M564.300 453.200c8-2 12-8 16.300-13.700 8-2 16-2 24.100 0 4 6 10 11 20.600 12.800l-2.600 7.700h-56.700z"/>
<path d="M580.600 460h31.800v26.700h-31.800zM586.600 486.700h23.200v9.500h-23.200zM576.300 497h43.900v7.800h-43.900z"/>
<path d="M697.500 453.200c8-2 12-8 16.300-13.700 8-2 16-2 24.100 0 4 6 10 11 21.500 12.800l-2.600 7.700h-57.600z"/>
<path d="M709.500 460h32.700v26.700h-32.700zM713 486.700h24v9.500h-24zM706 497h44v7.800h-44z"/>
<path d="M647.700 436.900c3 4 8 8 12 10.300-1 8-4 14-8.700 18.800-4 2-9 4-14.500 5.300l-.9-7.800c3-6 5-14 5.100-23.200z"/>
<path d="M675 437c-3 4-8 8-12 10.200 1 7 3 12 7 17.200 4 3 10 5 16.300 6.900l.7-7.800c-3-6-6-14-6.700-23.200z"/>
<path d="M776 438.300h14l1.400 33.400h-22.400l-2.600-7c4-8 7-17 9.600-26.400z"/>
<path d="M795.600 438.300h12.400c3 10 7 19 11 26.400l-1.200 7h-20.800z"/>
<path d="M769 489l3-2h18v5.500h-19zM794 487h19l3.400 2-2 3.500h-20.400z"/>
</g>
<path d="M580.600 460h31.800M586.600 486.700h23.200M586.600 496.200h23.200M709.500 460h32.700M713 486.700h24M713 496.200h24" stroke="#c89070" stroke-width=".8"/>
<!-- small dark red collar strips -->
<path d="M769 364.500l3-1.700h21l1.500 2-1 2.700h-22zM799.700 362.800h22l3 1.700-2 3h-22l-1.500-2.500z" fill="#6e1a1e" stroke="#3a1a20" stroke-width=".6"/>
<!-- dark red rects -->
<rect x="723.300" y="512.800" width="22.300" height="8.400" fill="#8a161c" stroke="#4a2028" stroke-width=".8"/>
<rect x="756" y="512.800" width="22.300" height="8.400" fill="#8a161c" stroke="#4a2028" stroke-width=".8"/>
<!-- vertical strips -->
<rect x="640.800" y="482.400" width="4.400" height="80" fill="#5a2c1c" stroke="#3a2a2a" stroke-width=".8"/>
<rect x="681.200" y="482.400" width="4.400" height="80" fill="#5a2c1c" stroke="#3a2a2a" stroke-width=".8"/>
<!-- dotted sewing lines -->
<path d="M663 447l84 62M747 509l3-18" stroke="#f4e6f4" stroke-width="1.300" stroke-dasharray="2 2.500" fill="none"/>
<path d="M750 491l14-30 30-80M779 515l20-140" stroke="#b89ad8" stroke-width=".9" stroke-dasharray="1.500 2.500" fill="none"/>
<circle cx="750" cy="489" r="1.800" fill="#3a2a8a"/><circle cx="779" cy="514" r="1.600" fill="#fff"/><circle cx="663" cy="447" r="1.600" fill="#fff"/>
</g>
<!-- toolbar pill -->
<g style="filter:blur(.4px)">
<g transform="translate(555 84)"><path d="M-5 4.500l8-8" stroke="#d8d8d8" stroke-width="1.500"/><path d="M2.500-4l2-1.500 .5 6" stroke="#d9d24a" stroke-width="1.300" fill="none"/></g>
<g transform="translate(575 84)"><path d="M-3.200-5.500l2 1.200h2.400l2-1.200 4.300 3-2 2.600-1.300-.9v6.300h-8.400v-6.300l-1.300 .9-2-2.600z" fill="#fff"/></g>
<g transform="translate(595.500 83.500)"><circle r="5.300" fill="#f2f2f2"/><path d="M0-2.500v5.500" stroke="#c07a50" stroke-width="1.600"/><circle cx="0" cy="-3.600" r=".9" fill="#c07a50"/></g>
<g transform="translate(616 83.500)"><path d="M-3-5.500l7 .5-.5 9-7 1.500z" fill="#f3a014"/><path d="M-3-5.500l3 .2-.6 10.200-2.900 .6z" fill="#d9600c"/><path d="M-5-3v8" stroke="#ccc" stroke-width="1"/></g>
<g transform="translate(636 84)"><path d="M-3.200-5.500l2 1.200h2.400l2-1.200 4.300 3-2 2.600-1.300-.9v6.300h-8.400v-6.300l-1.300 .9-2-2.600z" fill="#fff"/><rect x="-6" y="2" width="4" height="4" fill="#e8a030"/></g>
</g>
</svg>
</div>
<div id="right" class="abs"></div>
<div class="abs" style="left:1049px;top:42px;width:231px;height:22px;background:#1f1f1f"></div>
<span class="t" style="left:1146.500px;top:32px;color:#d4d4d4;font-size:8.400px">物体窗口</span>
<svg style="left:1051px;top:32px" width="8" height="8" viewBox="0 0 8 8"><path d="M1 4h6M4 1.500l3 2.500-3 2.500" stroke="#ddd" stroke-width="1.200" fill="none"/></svg>
<svg style="left:0;top:0" width="1280" height="720" viewBox="0 0 1280 720"><g style="filter:blur(.35px)">
<g transform="translate(1063 52)"><path d="M-5-4.500h10M-5-1.500h10M-5 1.500h10M-5 4.500h10" stroke="#cfcfcf" stroke-width="1.700"/></g>
<g transform="translate(1091.500 51.500)"><path d="M-4.500-3.500l9.500-1-1.500 8.500-9.500 1z" fill="#f0a010"/><path d="M-4.500-3.500l3-.3-1.500 8.500-3 .3z" fill="#c87808"/></g>
<rect x="1077" y="60" width="29" height="2" fill="#d89216"/>
<g transform="translate(1119.500 52)"><rect x="-5.500" y="-5.500" width="11" height="11" fill="#f2f2f2"/><rect x="-3.3" y="-5.5" width="2.200" height="2.200" fill="#1c1c1c"/><rect x="1.1000000000000005" y="-5.5" width="2.200" height="2.200" fill="#1c1c1c"/><rect x="-5.5" y="-3.3" width="2.200" height="2.200" fill="#1c1c1c"/><rect x="-1.0999999999999996" y="-3.3" width="2.200" height="2.200" fill="#1c1c1c"/><rect x="3.3000000000000007" y="-3.3" width="2.200" height="2.200" fill="#1c1c1c"/><rect x="-3.3" y="-1.0999999999999996" width="2.200" height="2.200" fill="#1c1c1c"/><rect x="1.1000000000000005" y="-1.0999999999999996" width="2.200" height="2.200" fill="#1c1c1c"/><rect x="-5.5" y="1.1000000000000005" width="2.200" height="2.200" fill="#1c1c1c"/><rect x="-1.0999999999999996" y="1.1000000000000005" width="2.200" height="2.200" fill="#1c1c1c"/><rect x="3.3000000000000007" y="1.1000000000000005" width="2.200" height="2.200" fill="#1c1c1c"/><rect x="-3.3" y="3.3000000000000007" width="2.200" height="2.200" fill="#1c1c1c"/><rect x="1.1000000000000005" y="3.3000000000000007" width="2.200" height="2.200" fill="#1c1c1c"/></g>
<g transform="translate(1148 52)"><circle r="5.600" fill="#f4f4f4"/><path d="M-3.500-1.200h7M-3.500 1.500h7M-1.200-3.500v7M1.500-3.500v7" stroke="#444" stroke-width=".9"/></g>
<g transform="translate(1176 52)"><path d="M-5 0h10" stroke="#e4e4e4" stroke-width="2"/><circle cx="-4" cy="0" r="1.800" fill="#e4e4e4"/></g>
<g transform="translate(1204 52)"><path d="M-5 5l10-10" stroke="#e4e4e4" stroke-width="1.600"/><circle cx="-4.500" cy="4.500" r="1.500" fill="#e4e4e4"/><circle cx="4.500" cy="-4.500" r="1.500" fill="#e4e4e4"/><circle cx="0" cy="0" r="1.300" fill="#e4e4e4"/></g>
<g transform="translate(1232.500 52)"><path d="M-4.500 4.500l9-9" stroke="#bdbdbd" stroke-width="3.200" stroke-dasharray="1.800 1.200"/><path d="M-3 0l3 3M0-3l3 3" stroke="#e8e8e8" stroke-width="1"/></g>
<g transform="translate(1260 52)"><path d="M-5-5l4 2.500h2l4-2.500v6l-3-1.500v6.500h-1.500v-4h-1v4h-1.500v-6.500l-3 1.500z" fill="#e6e6e6"/></g>
<g fill="none" stroke="#bdbdbd" stroke-width="1.300"><circle cx="1270" cy="35.500" r="3"/><circle cx="1270" cy="260.500" r="3"/></g><path d="M1270 35.500l3-3M1270 260.500l3-3" stroke="#212121" stroke-width="1.300"/>
<g transform="translate(1062 81)"><path d="M0-3.600l4.200 7h-8.400z" fill="#8a7a10"/><path d="M0-1.200v2.400" stroke="#222" stroke-width="1"/></g>
<g transform="translate(1147 81)"><path d="M-4.500-3.500h3l1 1.200h5v6.300h-9z" fill="#e8e8e8"/><path d="M1.500-4.500v4M-.5-2.500h4" stroke="#212121" stroke-width="1.800"/><path d="M1.500-4.200v3.400M-.2-2.500h3.400" stroke="#e8e8e8" stroke-width=".9"/></g>
<path d="M1160 81h7M1163.500 77.500v7" stroke="#e6e6e6" stroke-width="1.300"/>
<g transform="translate(1205 81)" stroke="#555" stroke-width="1" fill="none"><rect x="-3.500" y="-2" width="5.500" height="5.500"/><path d="M-1.500-2v-1.800h5.500v5.500h-2"/></g>
<path d="M1242 81l2 2.500 4-5.500" stroke="#4e4e4e" stroke-width="1.300" fill="none"/>
<rect x="1058" y="96" width="211" height="12" fill="#181818"/>
<path d="M1064 100h4.400l-2.200 3z" fill="#e8e8e8"/>
<g transform="translate(1175 101.500)"><path d="M-3.500 3.500l1-2.500 5-5 1.500 1.500-5 5z" fill="#f0f0f0"/></g>
<path d="M1231.500 101.700h7M1235 98.200v7" stroke="#f0f0f0" stroke-width="1.500"/>
<g transform="translate(1248 101.500)"><path d="M-4.500-3.500h3.500l1 1.200h4.500v6h-9z" fill="#f0f0f0"/></g>
<rect x="1071" y="110.8" width="24.500" height="24.7" fill="#ffb7c1"/>
<g transform="translate(1238.500 123.3)"><rect x="-3.500" y="-3.500" width="7" height="7" fill="none" stroke="#9a9a9a" stroke-width="1"/><path d="M-3.500-.5h7M-.5-3.500v3" stroke="#9a9a9a" stroke-width="1"/><rect x="-3.500" y="-3.500" width="3" height="3" fill="#cfcfcf"/></g>
<g transform="translate(1252.500 123.3)"><rect x="-2.500" y="-4" width="6.500" height="6.500" rx="1" fill="none" stroke="#e8e8e8" stroke-width="1.200"/><rect x="-4.500" y="-2" width="6.500" height="6.500" rx="1.200" fill="#e8e8e8"/><path d="M-3-.2h3.500M-1.200-1.900v3.500" stroke="#222" stroke-width="1"/></g>
<rect x="1071" y="140.0" width="24.500" height="24.7" fill="#ffd0d5"/>
<g transform="translate(1238.500 152.5)"><rect x="-3.500" y="-3.500" width="7" height="7" fill="none" stroke="#9a9a9a" stroke-width="1"/><path d="M-3.500-.5h7M-.5-3.500v3" stroke="#9a9a9a" stroke-width="1"/><rect x="-3.500" y="-3.500" width="3" height="3" fill="#cfcfcf"/></g>
<g transform="translate(1252.500 152.5)"><rect x="-2.500" y="-4" width="6.500" height="6.500" rx="1" fill="none" stroke="#e8e8e8" stroke-width="1.200"/><rect x="-4.500" y="-2" width="6.500" height="6.500" rx="1.200" fill="#e8e8e8"/><path d="M-3-.2h3.500M-1.200-1.900v3.500" stroke="#222" stroke-width="1"/></g>
<rect x="1071" y="169.2" width="24.500" height="24.7" fill="#e8747b"/>
<g transform="translate(1238.500 181.7)"><rect x="-3.500" y="-3.500" width="7" height="7" fill="none" stroke="#9a9a9a" stroke-width="1"/><path d="M-3.500-.5h7M-.5-3.500v3" stroke="#9a9a9a" stroke-width="1"/><rect x="-3.500" y="-3.500" width="3" height="3" fill="#cfcfcf"/></g>
<g transform="translate(1252.500 181.7)"><rect x="-2.500" y="-4" width="6.500" height="6.500" rx="1" fill="none" stroke="#e8e8e8" stroke-width="1.200"/><rect x="-4.500" y="-2" width="6.500" height="6.500" rx="1.200" fill="#e8e8e8"/><path d="M-3-.2h3.500M-1.200-1.900v3.500" stroke="#222" stroke-width="1"/></g>
<rect x="1071" y="198.4" width="24.500" height="24.7" fill="#e8747b"/>
<g transform="translate(1238.500 210.9)"><rect x="-3.500" y="-3.500" width="7" height="7" fill="none" stroke="#9a9a9a" stroke-width="1"/><path d="M-3.500-.5h7M-.5-3.500v3" stroke="#9a9a9a" stroke-width="1"/><rect x="-3.500" y="-3.500" width="3" height="3" fill="#cfcfcf"/></g>
<g transform="translate(1252.500 210.9)"><rect x="-2.500" y="-4" width="6.500" height="6.500" rx="1" fill="none" stroke="#e8e8e8" stroke-width="1.200"/><rect x="-4.500" y="-2" width="6.500" height="6.500" rx="1.200" fill="#e8e8e8"/><path d="M-3-.2h3.500M-1.200-1.900v3.500" stroke="#222" stroke-width="1"/></g>
<rect x="1071" y="227.6" width="24.500" height="22.5" fill="#ffffff"/>
<g transform="translate(1238.500 240.1)"><rect x="-3.500" y="-3.500" width="7" height="7" fill="none" stroke="#9a9a9a" stroke-width="1"/><path d="M-3.500-.5h7M-.5-3.500v3" stroke="#9a9a9a" stroke-width="1"/><rect x="-3.500" y="-3.500" width="3" height="3" fill="#cfcfcf"/></g>
<g transform="translate(1252.500 240.1)"><rect x="-2.500" y="-4" width="6.500" height="6.500" rx="1" fill="none" stroke="#e8e8e8" stroke-width="1.200"/><rect x="-4.500" y="-2" width="6.500" height="6.500" rx="1.200" fill="#e8e8e8"/><path d="M-3-.2h3.500M-1.200-1.900v3.500" stroke="#222" stroke-width="1"/></g>
<path d="M1058.500 122l2.500 3 4.500-6" stroke="#f09020" stroke-width="1.700" fill="none"/>
<rect x="1270.500" y="96" width="4" height="47" rx="1.500" fill="#4a4a4a"/>
<rect x="1271" y="270" width="3.500" height="199" rx="1.500" fill="#454545"/>
</g></svg>
<span class="t" style="left:1101px;top:119.8px;color:#cdcdcd;font-size:9px;letter-spacing:.15px">shirt</span>
<span class="t" style="left:1101px;top:149.0px;color:#cdcdcd;font-size:9px;letter-spacing:.15px">shirtstripe</span>
<span class="t" style="left:1101px;top:178.2px;color:#cdcdcd;font-size:9px;letter-spacing:.15px">vest</span>
<span class="t" style="left:1101px;top:207.4px;color:#cdcdcd;font-size:9px;letter-spacing:.15px">qunbai1</span>
<span class="t" style="left:1101px;top:236.6px;color:#cdcdcd;font-size:9px;letter-spacing:.15px">qunbai2</span>
<span class="t" style="left:1170.500px;top:77.500px;color:#d6d6d6;font-size:7.500px">增加</span>
<span class="t" style="left:1212px;top:77.500px;color:#303030;font-size:7.500px">复制</span>
<span class="t" style="left:1131.500px;top:97.500px;color:#e0e0e0">默认组</span>
<div class="abs" style="left:1049px;top:252px;width:231px;height:2px;background:#0e0e0e"></div>
<span class="t" style="left:1141.500px;top:255.800px;color:#d6d6d6;font-size:8.400px">属性编辑器</span>
<svg style="left:1051px;top:257px" width="8" height="8" viewBox="0 0 8 8"><path d="M7 4h-6M4 1.500l-3 2.500 3 2.500" stroke="#ddd" stroke-width="1.200" fill="none"/></svg>
<div class="abs" style="left:1208px;top:303.4px;width:56px;height:14px;background:#1d1d1d"></div>
<div class="abs" style="left:1208px;top:320.8px;width:56px;height:14px;background:#1d1d1d"></div>
<div class="abs" style="left:1208px;top:356.3px;width:56px;height:14px;background:#1d1d1d"></div>
<div class="abs" style="left:1208px;top:373.7px;width:56px;height:14px;background:#1d1d1d"></div>
<div class="abs" style="left:1208px;top:390.8px;width:56px;height:14px;background:#1d1d1d"></div>
<div class="abs" style="left:1208px;top:443.0px;width:56px;height:14px;background:#1d1d1d"></div>
<div class="abs" style="left:1171px;top:285px;width:93px;height:14px;background:#1a1a1a"></div>
<div class="abs" style="left:1189px;top:338.500px;width:75px;height:14px;background:#1a1a1a"></div>
<div class="abs" style="left:1196px;top:408px;width:54px;height:14px;background:#1b1b1b"></div>
<div class="abs" style="left:1196px;top:426px;width:54px;height:14px;background:#1b1b1b"></div>
<span class="t" style="left:1067.500px;top:272.0px;color:#cfcfcf">模拟属性</span>
<span class="t" style="left:1067.500px;top:288.0px;color:#cfcfcf">预设</span>
<span class="t" style="left:1067.500px;top:306.2px;color:#cfcfcf">时间间隔</span>
<span class="t" style="left:1212px;top:306.2px;color:#d4d4d4">0.033333</span>
<span class="t" style="left:1067.500px;top:323.6px;color:#cfcfcf">每帧模拟</span>
<span class="t" style="left:1214.4px;top:323.6px;color:#d4d4d4">1</span>
<span class="t" style="left:1067.500px;top:341.4px;color:#cfcfcf">CG完成状态</span>
<span class="t" style="left:1067.500px;top:359.1px;color:#cfcfcf">CG循环次数</span>
<span class="t" style="left:1212px;top:359.1px;color:#d4d4d4">50</span>
<span class="t" style="left:1067.500px;top:376.5px;color:#cfcfcf">CG残差</span>
<span class="t" style="left:1212px;top:376.5px;color:#d4d4d4">0.000100</span>
<span class="t" style="left:1067.500px;top:393.6px;color:#cfcfcf">自我冲突检查反复次数</span>
<span class="t" style="left:1214.4px;top:393.6px;color:#d4d4d4">1</span>
<span class="t" style="left:1067.500px;top:410.9px;color:#cfcfcf">空气阻力</span>
<span class="t" style="left:1067.500px;top:428.7px;color:#cfcfcf">重力</span>
<span class="t" style="left:1067.500px;top:445.8px;color:#cfcfcf">使用中CPU的数</span>
<span class="t" style="left:1214.4px;top:445.8px;color:#d4d4d4">12</span>
<span class="t" style="left:1067.500px;top:462.5px;color:#cfcfcf">精密的面料伸缩性模拟</span>
<span class="t" style="left:1173px;top:288.800px;color:#e4e4e4">用户自定义</span>
<span class="t" style="left:1192px;top:341.800px;color:#e0e0e0">Iteration</span>
<span class="t" style="left:1201px;top:410.800px;color:#d4d4d4">1.0</span>
<span class="t" style="left:1200px;top:428.800px;color:#d4d4d4">0.00</span>
<span class="t" style="left:1207px;top:462.500px;color:#cfcfcf">关闭</span>
<span class="t" style="left:1067.500px;top:478px;color:#e2a21a">地面</span>
<span class="t" style="left:1067.500px;top:491.400px;color:#e2a21a">模特-服装冲突检测</span>
<span class="t" style="left:1080px;top:506.200px;color:#cfcfcf">三角形-顶点</span>
<span class="t" style="left:1203px;top:506.200px;color:#cfcfcf">打开</span>
<span class="t" style="left:1080px;top:524px;color:#cfcfcf">线段-线段</span>
<span class="t" style="left:1203px;top:524px;color:#cfcfcf">关闭</span>
<span class="t" style="left:1067.500px;top:539.100px;color:#e2a21a">自我冲突检测</span>
<div class="abs" style="left:1049px;top:552px;width:231px;height:9px;overflow:hidden"><span class="t" style="left:31px;top:.800px;color:#cfcfcf">三角形-顶点</span><span class="t" style="left:154px;top:.800px;color:#cfcfcf">打开</span><svg style="left:141.500px;top:1.500px" width="8" height="8" viewBox="0 0 8 8"><rect x=".5" y=".5" width="7" height="7" rx="1.500" fill="#eaa21a"/><path d="M2 4l1.500 1.700 2.700-3.400" stroke="#222" stroke-width="1.200" fill="none"/></svg></div>
<svg style="left:0;top:0" width="1280" height="720" viewBox="0 0 1280 720"><g style="filter:blur(.3px)">
<g transform="translate(1242.700 275.500)"><path d="M-4.500-3.500h3.500l1 1.200h4.500v6h-9z" fill="#eee"/><path d="M-4.500-.8h9" stroke="#222" stroke-width=".7"/></g>
<g transform="translate(1257.800 275.500)"><path d="M-4.500-4h7.500l1.500 1.500v6.500h-9z" fill="#eee"/><rect x="-2.500" y="-4" width="4.500" height="2.800" fill="#222"/></g>
<path d="M1256.200 290.500h4.400l-2.200 3z" fill="#eee"/><path d="M1256.200 344h4.400l-2.200 3z" fill="#eee"/>
<g transform="translate(1258.900 414.4)"><path d="M0-3.300l3.300 3.300-3.300 3.300-3.300-3.300z" fill="none" stroke="#dcdcdc" stroke-width="1.200"/><circle r="1" fill="#dcdcdc"/></g>
<g transform="translate(1258.900 431.6)"><path d="M0-3.300l3.300 3.300-3.300 3.300-3.300-3.300z" fill="none" stroke="#dcdcdc" stroke-width="1.200"/><circle r="1" fill="#dcdcdc"/></g>
<rect x="1195" y="463.300" width="6" height="6" rx="1" fill="none" stroke="#8c8c8c" stroke-width="1"/>
<rect x="1191.500" y="524.800" width="6" height="6" rx="1" fill="none" stroke="#8c8c8c" stroke-width="1"/>
<g transform="translate(1194.900 510.500)"><rect x="-3.700" y="-3.700" width="7.400" height="7.400" rx="1.800" fill="#eaa21a"/><path d="M-2-.2l1.500 1.800 2.600-3.400" stroke="#221a08" stroke-width="1.200" fill="none"/></g>
<path d="M1058 480l4 2.200-4 2.200z" fill="#f4f4f4"/>
<path d="M1057.800 493.600h4.600l-2.300 3.600zM1057.800 541.300h4.600l-2.300 3.600z" fill="#f4f4f4"/>
<g transform="translate(1223.300 446)"><path d="M-3.500-12.500c2 0 3 .6 3.500 1.500 .5-.9 1.500-1.500 3.500-1.500M-3.500 12.500c2 0 3-.6 3.500-1.500 .5 .9 1.500 1.500 3.500 1.500M0-11v22" stroke="#000" stroke-width="3.200" fill="none"/><path d="M-3.500-12.500c2 0 3 .6 3.500 1.500 .5-.9 1.500-1.500 3.500-1.500M-3.500 12.500c2 0 3-.6 3.500-1.500 .5 .9 1.500 1.500 3.500 1.500M0-11v22" stroke="#fff" stroke-width="1.400" fill="none"/></g>
</g></svg>
<div id="bottom" class="abs"></div>
<div class="abs" style="left:25px;top:560.500px;width:1255px;height:12px;background:linear-gradient(#141414,#1c1c1c)"></div>
<div class="abs" style="left:25px;top:572.500px;width:1064px;height:27.500px;background:#262626"></div>
<div class="abs" style="left:1089px;top:572.500px;width:191px;height:125.500px;background:#202020"></div>
<span class="t" style="left:617.500px;top:566px;color:#d6d6d6;font-size:8.400px">动画编辑器</span>
<div class="abs" style="left:25px;top:600px;width:165px;height:98px;background:#2a2a2a"></div>
<div class="abs" style="left:190px;top:598.500px;width:900px;height:14px;background:#1d1d1d"></div>
<div class="abs" style="left:190px;top:598.500px;width:115px;height:14px;background:#191919"></div>
<div class="abs" style="left:190px;top:612px;width:900px;height:66px;background:#2c2c2c"></div>
<div class="abs" style="left:25px;top:630px;width:1065px;height:13px;background:#313131"></div>
<div class="abs" style="left:25px;top:643px;width:1065px;height:13px;background:#2a2a2a"></div>
<div class="abs" style="left:190px;top:678px;width:900px;height:3px;background:#1c1c1c"></div>
<div class="abs" style="left:190px;top:681px;width:900px;height:15px;background:#2a2a2a"></div>
<div class="abs" style="left:196px;top:682px;width:55px;height:13px;background:#272727"></div>
<div class="abs" style="left:1012px;top:682px;width:55px;height:13px;background:#272727"></div>
<div class="abs" style="left:392px;top:682px;width:465px;height:13px;background:#5c5c5c"></div>
<div class="abs" style="left:391px;top:682px;width:3px;height:13px;background:#c8c8c8"></div>
<div class="abs" style="left:855px;top:682px;width:3px;height:13px;background:#c8c8c8"></div>
<div class="abs" style="left:305px;top:612.500px;width:783px;height:3px;background:#6a6a6a"></div>
<div class="abs" style="left:300px;top:580px;width:105px;height:15px;background:#1a1a1a"></div>
<div class="abs" style="left:410px;top:580px;width:42px;height:15px;background:#1a1a1a"></div>
<span class="t" style="left:264px;top:582.500px;color:#d8d8d8">模拟品质</span>
<span class="t" style="left:303.500px;top:582.500px;color:#e4e4e4">用户自定义</span>
<span class="t" style="left:416px;top:582.500px;color:#e4e4e4">1</span>
<span class="t" style="left:205px;top:582.500px;color:#5a5a5a">1X</span>
<span class="t" style="left:42.500px;top:602.500px;color:#d8d8d8">增加动画</span>
<span class="t" style="left:62.500px;top:618.500px;color:#d8d8d8">模拟属性</span>
<span class="t" style="left:65px;top:631.500px;color:#d8d8d8">重力</span>
<span class="t" style="left:65px;top:645px;color:#e2a21a">空气阻力</span>
<span class="t" style="left:131.500px;top:632px;color:#c8881a;font-size:7px">0.00</span>
<span class="t" style="left:131.500px;top:645.500px;color:#c8881a;font-size:7px">1.00</span>
<span class="t" style="left:218.500px;top:683.500px;color:#d4d4d4">-100.00</span>
<span class="t" style="left:400px;top:683.500px;color:#e4e4e4">-30</span>
<span class="t" style="left:836.500px;top:683.500px;color:#e4e4e4">210</span>
<span class="t" style="left:1018.500px;top:683.500px;color:#d4d4d4">300.00</span>
<span class="t" style="left:1100px;top:584px;font-size:9px;color:#dcdcdc">环境设置</span>
<div class="abs" style="left:1187px;top:609px;width:69px;height:14px;background:#1b1b1b"></div>
<span class="t" style="left:1100px;top:611px;color:#d4d4d4">播放类型</span>
<span class="t" style="left:1191.500px;top:611px;color:#e8e8e8;font-size:8.500px">帧步进</span>
<div class="abs" style="left:1187px;top:627px;width:69px;height:14px;background:#1b1b1b"></div>
<span class="t" style="left:1100px;top:629px;color:#d4d4d4">当前帧</span>
<span class="t" style="left:1191.500px;top:629px;color:#e8e8e8;font-size:8.500px">14.00</span>
<div class="abs" style="left:1187px;top:644.5px;width:69px;height:14px;background:#1b1b1b"></div>
<span class="t" style="left:1100px;top:646.5px;color:#d4d4d4">开始帧</span>
<span class="t" style="left:1191.500px;top:646.5px;color:#e8e8e8;font-size:8.500px">0.00</span>
<div class="abs" style="left:1187px;top:662px;width:69px;height:14px;background:#1b1b1b"></div>
<span class="t" style="left:1100px;top:664px;color:#d4d4d4">结束帧</span>
<span class="t" style="left:1191.500px;top:664px;color:#e8e8e8;font-size:8.500px">550.00</span>
<div class="abs" style="left:1187px;top:679.5px;width:69px;height:14px;background:#1b1b1b"></div>
<span class="t" style="left:1100px;top:681.5px;color:#d4d4d4">场景时间变换</span>
<span class="t" style="left:1191.500px;top:681.5px;color:#e8e8e8;font-size:8.500px">1.00</span>
<span class="t" style="left:10px;top:703.500px;color:#c8c8c8;font-size:7.500px">Version: 2025.0.243 (r54757)</span>
<svg style="left:0;top:0" width="1280" height="720" viewBox="0 0 1280 720"><g style="filter:blur(.3px)">
<g transform="translate(34 587.500)"><circle cx="-1.500" cy="1.500" r="2.500" fill="#d0d0d0"/><path d="M0-3h5M2-1h3M2 1h3" stroke="#8a8a8a" stroke-width="1"/></g>
<g transform="translate(66.500 587.500)" fill="#8a8a8a"><rect x="-6" y="-3.500" width="1.500" height="7"/><path d="M0-3.500v7l-4.500-3.500zM5-3.500v7l-4.500-3.500z"/></g>
<g transform="translate(90.500 587.500)" fill="#8a8a8a"><rect x="-4" y="-3.500" width="1.500" height="7"/><path d="M3-3.500v7l-5-3.500z"/></g>
<g transform="translate(114.500 587.500)" fill="#8a8a8a"><path d="M-3-4.500v9l6.500-4.500z"/></g>
<g transform="translate(138.500 587.500)" fill="#a8a8a8"><rect x="2.500" y="-3.500" width="1.500" height="7"/><path d="M-3-3.500v7l5-3.500z"/></g>
<g transform="translate(162.500 587.500)" fill="#a8a8a8"><rect x="4.500" y="-3.500" width="1.500" height="7"/><path d="M0-3.500v7l4.500-3.500zM-5-3.500v7l4.500-3.500z"/></g>
<g transform="translate(186.500 587.500)" fill="none" stroke="#666" stroke-width="1.200"><path d="M-4 1v-3h8M4 0v3h-8"/><path d="M2.500-4l2 2-2 2M-2.500 1l-2 2 2 2" stroke-width="1"/></g>
<g transform="translate(242.500 587.500)" fill="none" stroke="#6a6a6a" stroke-width="1.200"><path d="M-2-3l-3 3 3 3M2-3l3 3-3 3M-3 0h6"/></g>
<path d="M397.300 585.800h4.400l-2.200 3z" fill="#eee"/>
<path d="M442.500 585l2-2.500 2 2.500zM442.500 590l2 2.500 2-2.500z" fill="#eee"/>
<g transform="translate(472.500 587.500)" stroke="#7a7a7a" stroke-width="1.200" fill="none"><path d="M-4-4l8 8M4-4l-8 8M-4-4h2.500M-4-4v2.500M4-4h-2.500M4-4v2.500M-4 4h2.500M-4 4v-2.500M4 4h-2.500M4 4v-2.500"/></g>
<circle cx="34.500" cy="607" r="3.200" fill="#e89a1a"/><circle cx="34.500" cy="607" r="1.200" fill="#2a2a2a"/>
<rect x="28" y="620.5" width="6" height="6" rx="1" fill="#3a3a3a"/>
<rect x="28" y="633.5" width="6" height="6" rx="1" fill="#3a3a3a"/>
<rect x="28" y="647" width="6" height="6" rx="1" fill="#3a3a3a"/>
<path d="M43 622h4l-2 3z" fill="#ddd"/>
<path d="M53 620.500l2.500 5.500 2.500-5.500M54 620.500l1.500 3 1.500-3" stroke="#bbb" stroke-width=".9" fill="none"/>
<circle cx="166.500" cy="636.5" r="1" fill="#eee"/><path d="M174.500 633.3l3.200 3.200-3.200 3.200-3.200-3.200z" fill="#eee"/><circle cx="174.500" cy="636.5" r="1" fill="#2a2a2a"/><circle cx="182.500" cy="636.5" r="1" fill="#eee"/>
<circle cx="166.500" cy="650" r="1" fill="#eee"/><path d="M174.500 646.8l3.200 3.200-3.200 3.200-3.200-3.200z" fill="#eee"/><circle cx="174.500" cy="650" r="1" fill="#2a2a2a"/><circle cx="182.500" cy="650" r="1" fill="#eee"/>
<path d="M196.3 603v8M211.9 603v8M227.5 603v8M243.1 603v8M258.7 603v8M274.3 603v8M289.9 603v8M305.5 603v8M321.1 603v8M336.7 603v8M352.3 603v8M367.9 603v8M383.5 603v8M399.1 603v8M414.7 603v8M430.3 603v8M445.9 603v8M461.5 603v8M477.1 603v8M492.7 603v8M508.3 603v8M523.9 603v8M539.5 603v8M555.1 603v8M570.7 603v8M586.3 603v8M601.9 603v8M617.5 603v8M633.1 603v8M648.7 603v8M664.3 603v8M679.9 603v8M695.5 603v8M711.1 603v8M726.7 603v8M742.3 603v8M757.9 603v8M773.5 603v8M789.1 603v8M804.7 603v8M820.3 603v8M835.9 603v8M851.5 603v8M867.1 603v8M882.7 603v8M898.3 603v8M913.9 603v8M929.5 603v8M945.1 603v8M960.7 603v8M976.3 603v8M991.9 603v8M1007.5 603v8M1023.1 603v8M1038.7 603v8M1054.3 603v8M1069.9 603v8M1085.5 603v8" stroke="#5c5c5c" stroke-width="1"/>
<path d="M204.1 607.500v3.500M219.7 607.500v3.500M235.3 607.500v3.500M250.9 607.500v3.500M266.5 607.500v3.500M282.1 607.500v3.500M297.7 607.500v3.500M313.3 607.500v3.500M328.9 607.500v3.500M344.5 607.500v3.500M360.1 607.500v3.500M375.7 607.500v3.500M391.3 607.500v3.500M406.9 607.500v3.500M422.5 607.500v3.500M438.1 607.500v3.500M453.7 607.500v3.500M469.3 607.500v3.500M484.9 607.500v3.500M500.5 607.500v3.500M516.1 607.500v3.500M531.7 607.500v3.500M547.3 607.500v3.500M562.9 607.500v3.500M578.5 607.500v3.500M594.1 607.500v3.500M609.7 607.500v3.500M625.3 607.500v3.500M640.9 607.500v3.500M656.5 607.500v3.500M672.1 607.500v3.500M687.7 607.500v3.500M703.3 607.500v3.500M718.9 607.500v3.500M734.5 607.500v3.500M750.1 607.500v3.500M765.7 607.500v3.500M781.3 607.500v3.500M796.9 607.500v3.500M812.5 607.500v3.500M828.1 607.500v3.500M843.7 607.500v3.500M859.3 607.500v3.500M874.9 607.500v3.500M890.5 607.500v3.500M906.1 607.500v3.500M921.7 607.500v3.500M937.3 607.500v3.500M952.9 607.500v3.500M968.5 607.500v3.500M984.1 607.500v3.500M999.7 607.500v3.500M1015.3 607.500v3.500M1030.9 607.500v3.500M1046.5 607.500v3.500M1062.1 607.500v3.500M1077.7 607.500v3.500" stroke="#4a4a4a" stroke-width="1"/>
<text x="197.8" y="606.500" font-size="4.500" fill="#707070" font-family="Liberation Sans,sans-serif">-28</text><text x="213.4" y="606.500" font-size="4.500" fill="#707070" font-family="Liberation Sans,sans-serif">-24</text><text x="229.0" y="606.500" font-size="4.500" fill="#707070" font-family="Liberation Sans,sans-serif">-20</text><text x="244.6" y="606.500" font-size="4.500" fill="#707070" font-family="Liberation Sans,sans-serif">-16</text><text x="260.2" y="606.500" font-size="4.500" fill="#707070" font-family="Liberation Sans,sans-serif">-12</text><text x="275.8" y="606.500" font-size="4.500" fill="#707070" font-family="Liberation Sans,sans-serif">-8</text><text x="291.4" y="606.500" font-size="4.500" fill="#707070" font-family="Liberation Sans,sans-serif">-4</text><text x="307.0" y="606.500" font-size="4.500" fill="#707070" font-family="Liberation Sans,sans-serif">0</text><text x="322.6" y="606.500" font-size="4.500" fill="#707070" font-family="Liberation Sans,sans-serif">4</text><text x="338.2" y="606.500" font-size="4.500" fill="#707070" font-family="Liberation Sans,sans-serif">8</text><text x="353.8" y="606.500" font-size="4.500" fill="#707070" font-family="Liberation Sans,sans-serif">12</text><text x="369.4" y="606.500" font-size="4.500" fill="#707070" font-family="Liberation Sans,sans-serif">16</text><text x="385.0" y="606.500" font-size="4.500" fill="#707070" font-family="Liberation Sans,sans-serif">20</text><text x="400.6" y="606.500" font-size="4.500" fill="#707070" font-family="Liberation Sans,sans-serif">24</text><text x="416.2" y="606.500" font-size="4.500" fill="#707070" font-family="Liberation Sans,sans-serif">28</text><text x="431.8" y="606.500" font-size="4.500" fill="#707070" font-family="Liberation Sans,sans-serif">32</text><text x="447.4" y="606.500" font-size="4.500" fill="#707070" font-family="Liberation Sans,sans-serif">36</text><text x="463.0" y="606.500" font-size="4.500" fill="#707070" font-family="Liberation Sans,sans-serif">40</text><text x="478.6" y="606.500" font-size="4.500" fill="#707070" font-family="Liberation Sans,sans-serif">44</text><text x="494.2" y="606.500" font-size="4.500" fill="#707070" font-family="Liberation Sans,sans-serif">48</text><text x="509.8" y="606.500" font-size="4.500" fill="#707070" font-family="Liberation Sans,sans-serif">52</text><text x="525.4" y="606.500" font-size="4.500" fill="#707070" font-family="Liberation Sans,sans-serif">56</text><text x="541.0" y="606.500" font-size="4.500" fill="#707070" font-family="Liberation Sans,sans-serif">60</text><text x="556.6" y="606.500" font-size="4.500" fill="#707070" font-family="Liberation Sans,sans-serif">64</text><text x="572.2" y="606.500" font-size="4.500" fill="#707070" font-family="Liberation Sans,sans-serif">68</text><text x="587.8" y="606.500" font-size="4.500" fill="#707070" font-family="Liberation Sans,sans-serif">72</text><text x="603.4" y="606.500" font-size="4.500" fill="#707070" font-family="Liberation Sans,sans-serif">76</text><text x="619.0" y="606.500" font-size="4.500" fill="#707070" font-family="Liberation Sans,sans-serif">80</text><text x="634.6" y="606.500" font-size="4.500" fill="#707070" font-family="Liberation Sans,sans-serif">84</text><text x="650.2" y="606.500" font-size="4.500" fill="#707070" font-family="Liberation Sans,sans-serif">88</text><text x="665.8" y="606.500" font-size="4.500" fill="#707070" font-family="Liberation Sans,sans-serif">92</text><text x="681.4" y="606.500" font-size="4.500" fill="#707070" font-family="Liberation Sans,sans-serif">96</text><text x="697.0" y="606.500" font-size="4.500" fill="#707070" font-family="Liberation Sans,sans-serif">100</text><text x="712.6" y="606.500" font-size="4.500" fill="#707070" font-family="Liberation Sans,sans-serif">104</text><text x="728.2" y="606.500" font-size="4.500" fill="#707070" font-family="Liberation Sans,sans-serif">108</text><text x="743.8" y="606.500" font-size="4.500" fill="#707070" font-family="Liberation Sans,sans-serif">112</text><text x="759.4" y="606.500" font-size="4.500" fill="#707070" font-family="Liberation Sans,sans-serif">116</text><text x="775.0" y="606.500" font-size="4.500" fill="#707070" font-family="Liberation Sans,sans-serif">120</text><text x="790.6" y="606.500" font-size="4.500" fill="#707070" font-family="Liberation Sans,sans-serif">124</text><text x="806.2" y="606.500" font-size="4.500" fill="#707070" font-family="Liberation Sans,sans-serif">128</text><text x="821.8" y="606.500" font-size="4.500" fill="#707070" font-family="Liberation Sans,sans-serif">132</text><text x="837.4" y="606.500" font-size="4.500" fill="#707070" font-family="Liberation Sans,sans-serif">136</text><text x="853.0" y="606.500" font-size="4.500" fill="#707070" font-family="Liberation Sans,sans-serif">140</text><text x="868.6" y="606.500" font-size="4.500" fill="#707070" font-family="Liberation Sans,sans-serif">144</text><text x="884.2" y="606.500" font-size="4.500" fill="#707070" font-family="Liberation Sans,sans-serif">148</text><text x="899.8" y="606.500" font-size="4.500" fill="#707070" font-family="Liberation Sans,sans-serif">152</text><text x="915.4" y="606.500" font-size="4.500" fill="#707070" font-family="Liberation Sans,sans-serif">156</text><text x="931.0" y="606.500" font-size="4.500" fill="#707070" font-family="Liberation Sans,sans-serif">160</text><text x="946.6" y="606.500" font-size="4.500" fill="#707070" font-family="Liberation Sans,sans-serif">164</text><text x="962.2" y="606.500" font-size="4.500" fill="#707070" font-family="Liberation Sans,sans-serif">168</text><text x="977.8" y="606.500" font-size="4.500" fill="#707070" font-family="Liberation Sans,sans-serif">172</text><text x="993.4" y="606.500" font-size="4.500" fill="#707070" font-family="Liberation Sans,sans-serif">176</text><text x="1009.0" y="606.500" font-size="4.500" fill="#707070" font-family="Liberation Sans,sans-serif">180</text><text x="1024.6" y="606.500" font-size="4.500" fill="#707070" font-family="Liberation Sans,sans-serif">184</text><text x="1040.2" y="606.500" font-size="4.500" fill="#707070" font-family="Liberation Sans,sans-serif">188</text><text x="1055.8" y="606.500" font-size="4.500" fill="#707070" font-family="Liberation Sans,sans-serif">192</text><text x="1071.4" y="606.500" font-size="4.500" fill="#707070" font-family="Liberation Sans,sans-serif">196</text><text x="1087.0" y="606.500" font-size="4.500" fill="#707070" font-family="Liberation Sans,sans-serif">200</text>
<rect x="305" y="612" width="3" height="12" fill="#555"/><circle cx="306" cy="614" r="1.300" fill="#bbb"/>
<circle cx="306" cy="636" r="1.600" fill="#fff"/><circle cx="306" cy="649" r="1.600" fill="#fff"/>
<path d="M360 607v70" stroke="#e8e8e8" stroke-width="1.300"/><rect x="354.500" y="599" width="11.500" height="9" rx="1.500" fill="#f4f4f4"/>
<path d="M1075 686l3 2.500-3 2.500zM1082 686l-3 2.500 3 2.500z" fill="#d8d8d8"/>
<path d="M1248.300 612.500h4.400l-2.200 3z" fill="#eee"/>
<path d="M1249 685l2-2.500 2 2.500zM1249 688.500l2 2.500 2-2.500z" fill="#eee"/>
<rect x="1259" y="607.500" width="4" height="48" rx="1.500" fill="#585858"/><rect x="1259" y="655.500" width="4" height="35" fill="#161616"/>
<circle cx="1258" cy="570" r="2.800" fill="none" stroke="#ccc" stroke-width="1.200"/><path d="M1266.500 567.500l5 5M1271.500 567.500l-5 5" stroke="#e4e4e4" stroke-width="1.300"/>
<g stroke="#bdbdbd" fill="none" stroke-width="1"><rect x="1207" y="704.500" width="9" height="7.500" rx="1"/><path d="M1211.500 704.500v7.500"/></g>
<rect x="1223" y="704.500" width="10" height="7.500" rx="1.500" fill="#d8d8d8"/><rect x="1239" y="704.500" width="10" height="7.500" rx="1.500" fill="#d8d8d8"/>
<path d="M1258 705.500a3.500 3.500 0 1 0 4 1" stroke="#d8d8d8" stroke-width="1.300" fill="none"/><path d="M1260.500 704l3 1.500-2 2z" fill="#d8d8d8"/>
</g></svg>
<span class="t" style="left:354.500px;top:599.500px;width:11.500px;text-align:center;font-size:5.500px;line-height:8px;color:#333">14</span>
<span class="t" style="left:1224.500px;top:704.500px;font-size:5px;line-height:8px;color:#222">3D</span><span class="t" style="left:1240.500px;top:704.500px;font-size:5px;line-height:8px;color:#222">2D</span>
<div id="status" class="abs" style="z-index:-1"></div>
</body>
</html>
